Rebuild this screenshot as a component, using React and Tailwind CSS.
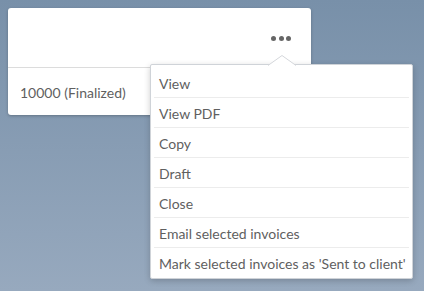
import React from "react";

const items = [
  "View",
  "View PDF",
  "Copy",
  "Draft",
  "Close",
  "Email selected invoices",
  "Mark selected invoices as 'Sent to client'",
];

export default function App() {
  return (
    <div
      className="relative w-[424px] h-[291px] overflow-hidden bg-gradient-to-b from-[#7890a9] to-[#97a9be] text-[14px] text-[#5f5f5f]"
      style={{ fontFamily: "Lato, 'Noto Sans', sans-serif" }}
    >
      <div className="pt-[8px] pl-[8px]">
        <div className="w-[303px] h-[107px] bg-white rounded-[3px] shadow-[0_1px_3px_rgba(0,0,0,0.25)] flex flex-col">
          <div className="h-[60px] border-b border-[#dcdcdc] flex items-center justify-end pr-[20px] pt-[1px] gap-[2.5px]">
            <span className="w-[5px] h-[5px] rounded-full bg-[#666]" />
            <span className="w-[5px] h-[5px] rounded-full bg-[#666]" />
            <span className="w-[5px] h-[5px] rounded-full bg-[#666]" />
          </div>
          <div className="flex-1 flex items-center pl-[12px] pt-[2px]">10000 (Finalized)</div>
        </div>
      </div>

      <div className="absolute left-[150px] top-[64px] w-[263px] h-[215px] bg-white rounded-[2px] border border-[#cfd3d8] shadow-[0_2px_6px_rgba(0,0,0,0.2)] pt-[3px] pb-[2px]">
        <svg
          className="absolute left-[117px] top-[-10px]"
          width="28"
          height="11"
          viewBox="0 0 28 11"
        >
          <polygon points="0,10.5 14,0.5 28,10.5" fill="#ffffff" />
          <polyline points="0,10.5 14,0.5 28,10.5" fill="none" stroke="#d4d7db" strokeWidth="1" />
        </svg>
        <div className="relative px-[3px]">
          {items.map((t, i) => (
            <div
              key={t}
              className={
                "h-[30px] flex items-center pl-[5px] pt-[1px] " +
                (i < items.length - 1 ? "border-b border-[#ececec]" : "")
              }
            >
              {t}
            </div>
          ))}
        </div>
      </div>
    </div>
  );
}
